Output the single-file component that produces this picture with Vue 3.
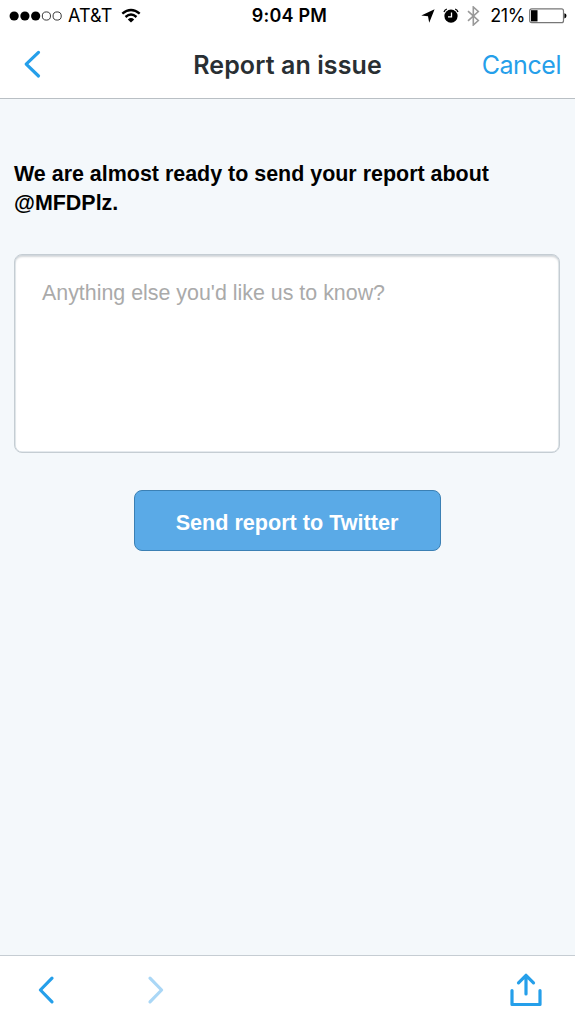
<template>
  <div class="screen">
    <header>
      <div class="status-bar">
        <div class="status-left">
          <svg class="signal" width="54" height="12" viewBox="0 0 54 12">
            <circle
              v-for="n in 5"
              :key="n"
              :cx="n * 10.75 - 5.6"
              cy="6"
              :r="n <= signal ? 4.6 : 4.1"
              :class="{ filled: n <= signal }"
            />
          </svg>
          <span class="carrier">AT&amp;T</span>
          <svg class="wifi" width="20" height="16" viewBox="0 0 20 16">
            <path d="M1.3 5.6Q10-1.8 18.7 5.6M4.5 9Q10 4.2 15.5 9" />
            <path class="dot" d="M6.8 11.4Q10 8.8 13.2 11.4L10 14.4Z" />
          </svg>
        </div>
        <span class="time">9:04 PM</span>
        <div class="status-right">
          <svg class="location" width="14" height="14" viewBox="0 0 14 14">
            <path d="M13.6.3L8.2 13.7 7 7.3.3 6.6Z" />
          </svg>
          <svg class="alarm" width="16" height="16" viewBox="0 0 16 16">
            <circle cx="8" cy="8.1" r="6.6" />
            <path class="bells" d="M1 4Q1.7 1.8 3.8 1.2M15 4Q14.3 1.8 12.2 1.2" />
            <path class="hands" d="M8.5 4.4V8.8H5" />
          </svg>
          <svg class="bluetooth" width="13" height="20" viewBox="0 0 13 20">
            <path d="M1 5.2L11.3 14.5 6.3 19V1L11.3 5.5 1 14.8" />
          </svg>
          <span class="percent">{{ battery }}%</span>
          <svg class="battery" width="38" height="16" viewBox="0 0 38 16">
            <rect class="case" x=".7" y=".9" width="33.8" height="13.8" rx="2" />
            <rect x="2" y="2.2" :width="(battery / 100) * 31" height="11.2" />
            <path d="M35.4 5.2Q37.5 5.6 37.5 7.8T35.4 10.4Z" />
          </svg>
        </div>
      </div>

      <nav class="nav-bar">
        <button class="icon-button" aria-label="Back">
          <svg width="18" height="30" viewBox="0 0 18 30">
            <path d="M15.5 2.4L3.2 14.2 15.5 26" />
          </svg>
        </button>
        <h1>Report an issue</h1>
        <button class="cancel">Cancel</button>
      </nav>
    </header>

    <main>
      <p class="message">
        We are almost ready to send your report about {{ account }}.
      </p>
      <textarea v-model="details" placeholder="Anything else you'd like us to know?"></textarea>
      <button class="submit">Send report to Twitter</button>
    </main>

    <footer>
      <button class="icon-button" aria-label="Previous page">
        <svg width="18" height="30" viewBox="0 0 18 30">
          <path d="M15 3.2L3.4 15 15 26.8" />
        </svg>
      </button>
      <button class="icon-button forward" aria-label="Next page" disabled>
        <svg width="18" height="30" viewBox="0 0 18 30">
          <path d="M3 3.2L14.6 15 3 26.8" />
        </svg>
      </button>
      <button class="icon-button share" aria-label="Share">
        <svg width="32" height="34" viewBox="0 0 32 34">
          <path d="M2 17.5V31.5H30V17.5M16 21V2.5M8.5 9.8L16 2.3 23.5 9.8" />
        </svg>
      </button>
    </footer>
  </div>
</template>

<script setup>
import { ref } from "vue";

const signal = 3;
const battery = 21;
const account = "@MFDPlz";
const details = ref("");
</script>

<style>
body {
  margin: 0;
}
</style>

<style scoped>
.screen {
  display: flex;
  flex-direction: column;
  height: 100vh;
  background: #f4f8fb;
  font-family: "Liberation Sans", Arial, sans-serif;
}
svg {
  display: block;
  flex: none;
}
button {
  margin: 0;
  padding: 0;
  border: 0;
  background: none;
  font-family: inherit;
}
header {
  box-sizing: border-box;
  height: 99px;
  background: #fff;
  border-bottom: 1px solid #b9bfc4;
  font-family: Inter, sans-serif;
}
.status-bar {
  display: grid;
  grid-template-columns: 1fr auto 1fr;
  align-items: center;
  height: 32px;
  padding: 0 8px 0 9px;
  font-size: 18px;
  line-height: 32px;
}
.status-left,
.status-right {
  display: flex;
  align-items: center;
}
.status-right {
  justify-content: flex-end;
}
.signal circle {
  fill: none;
  stroke: #222;
  stroke-width: 0.9;
}
.signal .filled {
  fill: #000;
  stroke: none;
}
.carrier {
  margin-left: 5px;
  letter-spacing: 0.1px;
}
.wifi {
  margin-left: 8px;
}
.wifi path {
  fill: none;
  stroke: #000;
  stroke-width: 2.4;
}
.wifi .dot {
  fill: #000;
  stroke: none;
}
.time {
  padding-left: 3px;
  font-weight: 600;
  letter-spacing: 0.2px;
}
.alarm {
  margin-left: 8px;
}
.bells {
  fill: none;
  stroke: #000;
  stroke-width: 1.3;
}
.hands {
  fill: none;
  stroke: #fff;
  stroke-width: 1.3;
}
.bluetooth {
  margin-left: 8px;
}
.bluetooth path {
  fill: none;
  stroke: #999;
  stroke-width: 1.6;
}
.percent {
  margin: 0 4px 0 10px;
  letter-spacing: -0.4px;
}
.case {
  fill: none;
  stroke: #777;
  stroke-width: 1.2;
}
.nav-bar {
  display: grid;
  grid-template-columns: 1fr auto 1fr;
  align-items: center;
  height: 66px;
  padding: 0 14px;
}
.nav-bar .icon-button {
  padding-left: 9px;
}
.icon-button path {
  fill: none;
  stroke: #259fea;
  stroke-width: 3.2;
  stroke-linecap: round;
  stroke-linejoin: round;
}
h1 {
  margin: 0;
  color: #292f33;
  font-size: 25px;
  font-weight: 570;
  letter-spacing: 0.1px;
}
.cancel {
  justify-self: end;
  color: #259fea;
  font-size: 25px;
  letter-spacing: -0.45px;
}
main {
  display: flex;
  flex: 1;
  flex-direction: column;
  align-items: center;
  padding: 61px 15px 0 14px;
}
.message {
  align-self: stretch;
  margin: 0;
  font-size: 21.45px;
  font-weight: bold;
  line-height: 29px;
}
textarea {
  box-sizing: border-box;
  width: 100%;
  height: 199px;
  margin: 36px 0 37px;
  padding: 26px 27px;
  border: 1px solid #c5cdd3;
  border-radius: 8px;
  background: #fff;
  box-shadow:
    inset 0 0 0 0.5px #ccd6dd,
    inset 0 2px 2px #d4d7d9;
  font-family: inherit;
  font-size: 21.4px;
  line-height: 25px;
  resize: none;
  outline: none;
}
textarea::placeholder {
  color: #aaa;
  opacity: 1;
}
.submit {
  width: 307px;
  height: 61px;
  padding-top: 4px;
  border: 1px solid #3b80b4;
  border-radius: 8px;
  background: #5aaae7;
  color: #fff;
  font-size: 21.6px;
  font-weight: bold;
}
footer {
  box-sizing: border-box;
  display: flex;
  align-items: center;
  height: 69px;
  padding: 0 33px 1px 37px;
  border-top: 1px solid #c6cdd3;
  background: #fff;
}
.forward {
  margin-left: 92px;
}
.forward path {
  stroke: #aad7f6;
}
.share {
  margin-left: auto;
}
</style>
